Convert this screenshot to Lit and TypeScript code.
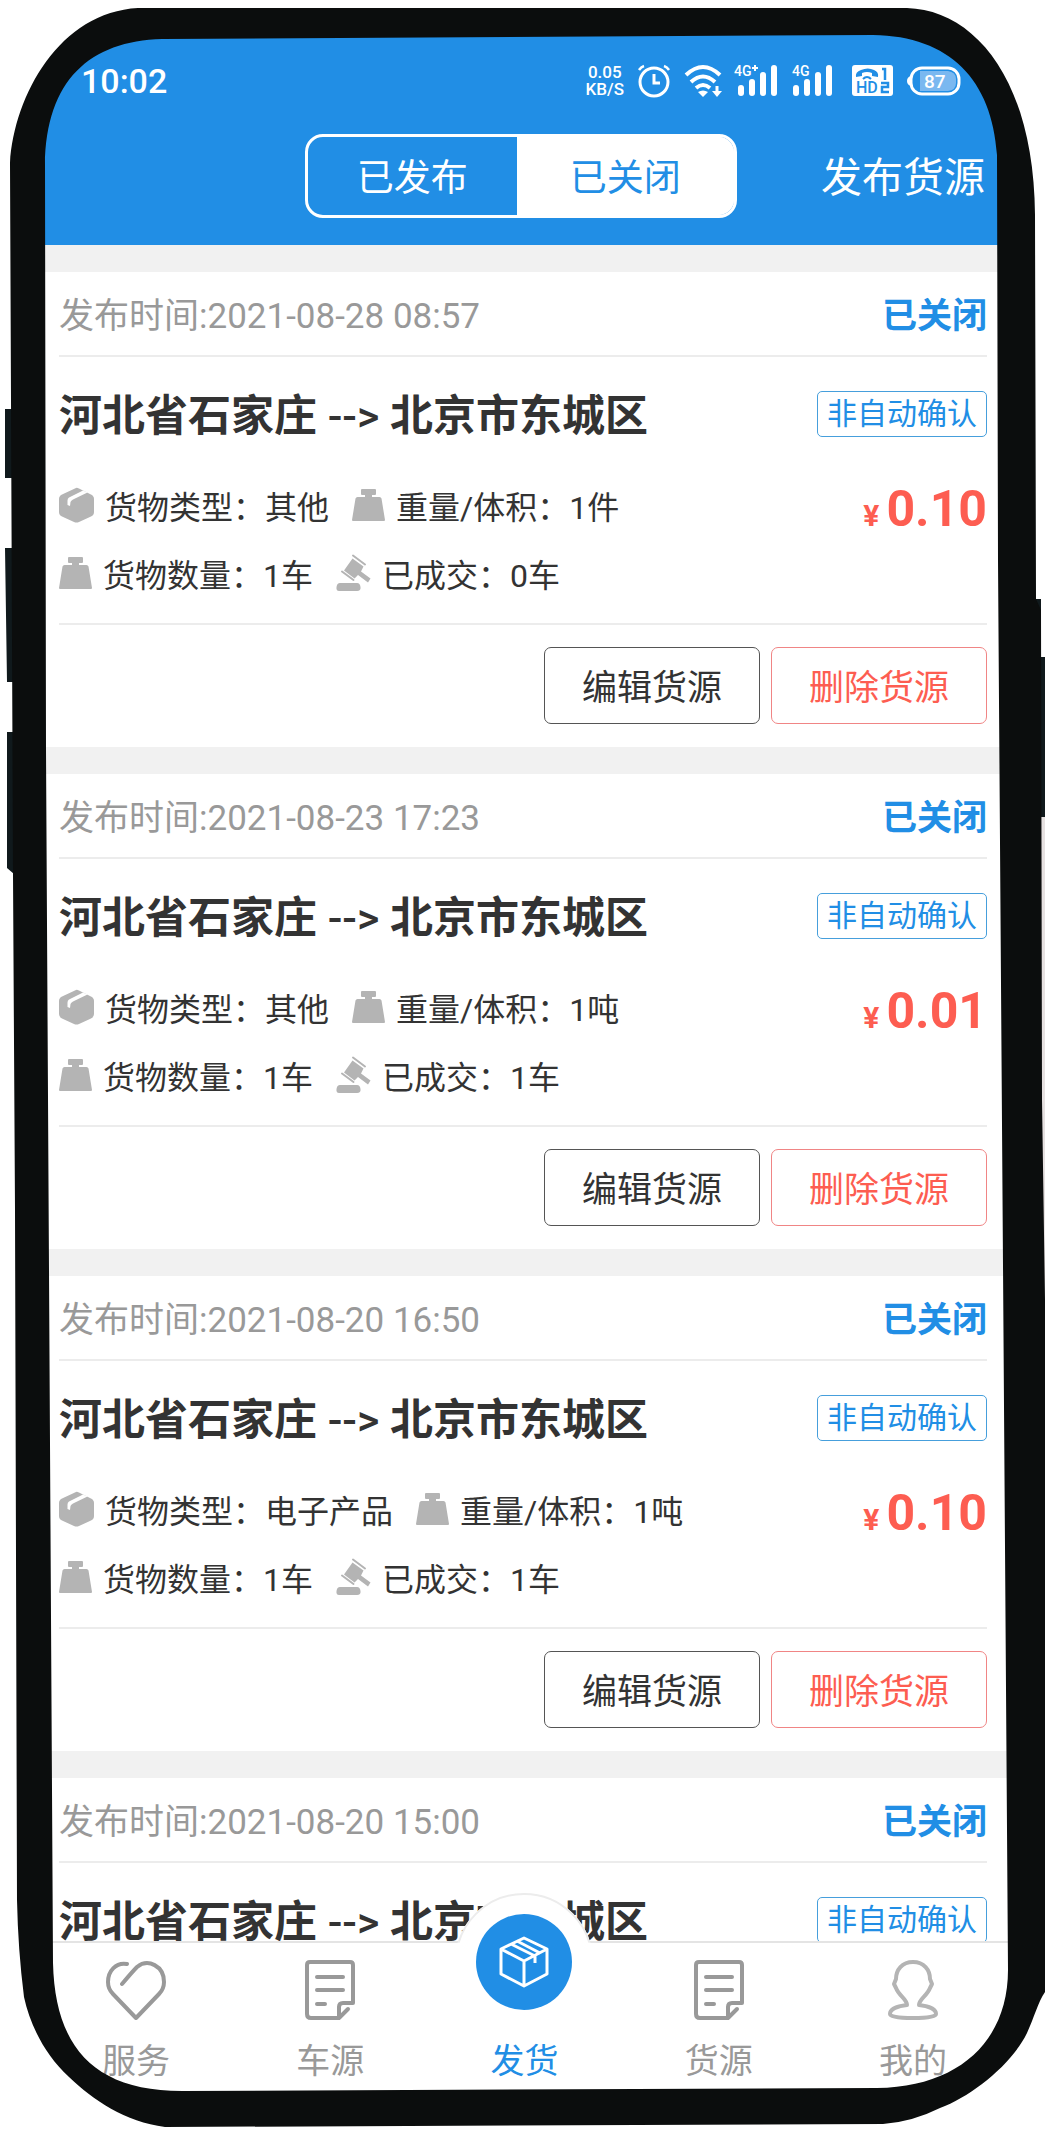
import { LitElement, html, svg, css } from "lit";
import { customElement, property, state } from "lit/decorators.js";

interface Cargo {
  time: string;
  type: string;
  amount: string;
  count: string;
  done: string;
  price: string;
}

const CARGOS: Cargo[] = [
  { time: "2021-08-28 08:57", type: "其他", amount: "1件", count: "1车", done: "0车", price: "0.10" },
  { time: "2021-08-23 17:23", type: "其他", amount: "1吨", count: "1车", done: "1车", price: "0.01" },
  { time: "2021-08-20 16:50", type: "电子产品", amount: "1吨", count: "1车", done: "1车", price: "0.10" },
  { time: "2021-08-20 15:00", type: "其他", amount: "1吨", count: "1车", done: "0车", price: "0.10" },
];

const boxIcon = html`<svg class="ico" width="35" height="36" viewBox="0 0 35 36" aria-hidden="true">
  <path d="M17 1 3 7.500Q0 9 0 12V25Q0 28 3 29.500L15 35Q17.500 36 20 35L32 29.500Q35 28 35 25V12Q35 9 32 7.500L20 1.500Q18 .5 17 1Z" fill="#b4b4b4"/>
  <path d="M8.500 18V13.500Q8.500 11.500 10 10.500L24 3.500 28.500 5.500 14 12.500Q12 13.500 11.500 15L11 19Z" fill="#fff"/>
</svg>`;

const weightIcon = html`<svg class="ico" width="33" height="34" viewBox="0 0 33 34" aria-hidden="true">
  <path d="M10 1H23Q24 1 24 2V6Q24 7 23 7H20V9H27.500Q29 9 29.500 10.500L33 32Q33 33 32 33H1Q0 33 0 32L3.500 10.500Q4 9 5.500 9H13V7H10Q9 7 9 6V2Q9 1 10 1Z" fill="#b4b4b4"/>
</svg>`;

const gavelIcon = html`<svg class="ico" width="35" height="38" viewBox="0 0 35 38" aria-hidden="true">
  <g fill="#b4b4b4">
    <path d="M4 29H21Q24 29 24.500 33Q25 37 21 37H3Q0 37 .5 33Q1 29 4 29Z"/>
    <path d="M16.500 4.500 27.500 12.500 25 17.500 34.500 24.500 32 28.500 22 21 18.500 24.500 8 16.500Z"/>
  </g>
  <path d="M17 1.500 29 10.500M6 17.500 17.500 26" stroke="#b4b4b4" stroke-width="2" stroke-linecap="round"/>
</svg>`;

const bars = (x: number) => svg`<g fill="#fff">
  <rect x=${x} y="21" width="6" height="11" rx="3"/>
  <rect x=${x + 11} y="15" width="6" height="17" rx="3"/>
  <rect x=${x + 22} y="8" width="6" height="24" rx="3"/>
  <rect x=${x + 33} y="1" width="6" height="31" rx="3"/>
</g>`;

const heartIcon = html`<svg width="60" height="60" viewBox="0 0 60 60" fill="none" stroke="#999" stroke-width="4" stroke-linecap="round" stroke-linejoin="round" aria-hidden="true">
  <path d="M21 4C10 2 2 11 2 22Q2 29 7 34L30 58 53 34Q58 29 58 22C58 6 42-2 31 7Q27 11 16 24"/>
</svg>`;

const noteIcon = html`<svg width="60" height="60" viewBox="0 0 60 60" fill="none" stroke="#999" stroke-width="4" stroke-linecap="round" stroke-linejoin="round" aria-hidden="true">
  <path d="M53 43V5Q53 2 50 2H10Q7 2 7 5V54Q7 58 11 58H39L48 49M53 43H43Q39 43 39 47V58"/>
  <path d="M17 17H43M17 30H43M17 44H25"/>
</svg>`;

const userIcon = html`<svg width="60" height="60" viewBox="0 0 60 60" fill="none" stroke="#b4b4b4" stroke-width="4" stroke-linejoin="round" aria-hidden="true">
  <path d="M30 2C19 2 13 10 13 19L11 24 13 28C16 36 24 39 24 45C15 46 7 49 7 54Q7 58 30 58Q53 58 53 54C53 49 45 46 36 45C36 39 44 36 47 28L49 24 47 19C47 10 41 2 30 2Z"/>
</svg>`;

const cubeIcon = html`<svg width="50" height="52" viewBox="0 0 50 52" fill="none" stroke="#fff" stroke-width="3" stroke-linejoin="round" aria-hidden="true">
  <path d="M25 2 48 13V38L25 50 2 38V13ZM2 13 25 25 48 13M25 25V50M12 8 36 20V27"/>
  <path d="M18 5 41 17"/>
</svg>`;

@customElement("cargo-card")
class CargoCard extends LitElement {
  @property({ attribute: false }) cargo!: Cargo;

  static styles = css`
    :host {
      display: block;
      background: #fff;
      padding: 0 23px 23px 20px;
    }
    .top {
      display: flex;
      box-sizing: border-box;
      justify-content: space-between;
      align-items: center;
      height: 85px;
      padding-bottom: 2px;
      border-bottom: 2px solid #ececec;
      font-size: 35px;
      color: #999;
    }
    .closed { color: #218ee5; font-weight: 700; }
    .route {
      display: flex;
      justify-content: space-between;
      align-items: center;
      height: 114px;
    }
    h2 { margin: 0; padding-bottom: 4px; font-size: 43px; font-weight: 700; color: #333; white-space: nowrap; }
    .arrow { font-weight: 500; }
    .tag {
      box-sizing: border-box;
      height: 46px;
      line-height: 44px;
      padding: 0 9px;
      border: 1px solid #469fdc;
      border-radius: 5px;
      color: #218ee5;
      font-size: 30px;
    }
    .body {
      display: flex;
      justify-content: space-between;
      padding: 0 0 16px;
      border-bottom: 2px solid #ececec;
    }
    .row { display: flex; height: 68px; align-items: center; font-size: 32px; color: #333; }
    .item { display: flex; align-items: center; gap: 11px; margin-right: 23px; white-space: nowrap; }
    .ico { flex: none; display: block; }
    .price { padding-top: 4px; line-height: 68px; color: #fd5d51; font-weight: 700; font-size: 50px; white-space: nowrap; }
    .yen { font-size: 30px; margin-right: 7px; }
    .actions { display: flex; justify-content: flex-end; gap: 11px; padding-top: 22px; }
    button {
      width: 216px;
      height: 77px;
      padding: 0 0 2px;
      font: inherit;
      font-size: 35px;
      color: #333;
      background: #fff;
      border: 1px solid #555;
      border-radius: 7px;
    }
    .del { color: #fd5d51; border-color: #f08585; }
  `;

  render() {
    const c = this.cargo;
    return html`
      <div class="top"><span>发布时间:${c.time}</span><span class="closed">已关闭</span></div>
      <div class="route"><h2>河北省石家庄<span class="arrow"> --&gt; </span>北京市东城区</h2><span class="tag">非自动确认</span></div>
      <div class="body">
        <div>
          <div class="row">
            <span class="item">${boxIcon}<span>货物类型：${c.type}</span></span>
            <span class="item">${weightIcon}<span>重量/体积：${c.amount}</span></span>
          </div>
          <div class="row">
            <span class="item">${weightIcon}<span>货物数量：${c.count}</span></span>
            <span class="item">${gavelIcon}<span>已成交：${c.done}</span></span>
          </div>
        </div>
        <div class="price"><span class="yen">¥</span>${c.price}</div>
      </div>
      <div class="actions">
        <button type="button">编辑货源</button>
        <button type="button" class="del">删除货源</button>
      </div>
    `;
  }
}

@customElement("status-bar")
class StatusBar extends LitElement {
  static styles = css`
    :host {
      display: flex;
      align-items: center;
      justify-content: space-between;
      height: 90px;
      color: #fff;
    }
    .clock { font-size: 34px; font-weight: 500; }
    .icons { display: flex; align-items: center; gap: 14px; }
    .speed { font-size: 17px; line-height: 17px; font-weight: 500; text-align: center; }
    svg { display: block; overflow: visible; }
    text { font-family: Roboto, sans-serif; font-weight: 500; }
  `;

  render() {
    return html`
      <span class="clock">10:02</span>
      <div class="icons">
        <div class="speed">0.05<br />KB/S</div>
        <svg width="32" height="34" viewBox="0 0 32 34" fill="none" stroke="#fff" stroke-width="3" aria-hidden="true">
          <circle cx="16" cy="18" r="14"/>
          <path d="M16 10V19H22"/>
          <path d="M1 6Q3 3 6 2M31 6Q29 3 26 2" stroke-width="2.500"/>
        </svg>
        <svg width="38" height="34" viewBox="0 0 38 34" fill="none" stroke="#fff" stroke-width="4" aria-hidden="true">
          <path d="M2 11Q19-5 36 11M7 18Q19 7 31 18"/>
          <path d="M12 24Q19 18 26 24"/>
          <path d="M14 28 19 33 24 28Q19 25 14 28Z" fill="#fff" stroke="none"/>
          <path d="M33 22V30" stroke-width="3"/>
          <path d="M28 27H38L33 33Z" fill="#fff" stroke="none"/>
        </svg>
        <svg width="43" height="34" viewBox="2 0 43 34" aria-hidden="true">
          ${bars(4)}<text x="0" y="12" font-size="14" fill="#fff">4G</text>
          <path d="M18 4H24M21 1V7" stroke="#fff" stroke-width="2"/>
        </svg>
        <svg width="40" height="34" viewBox="1 0 40 34" aria-hidden="true">
          ${bars(1)}<text x="0" y="12" font-size="14" fill="#fff">4G</text>
        </svg>
        <svg width="46" height="32" viewBox="-5 0 46 32" aria-hidden="true">
          <rect width="41" height="31" rx="3" fill="#fff"/>
          <path d="M4 12Q3 7 9 5Q16 2 22 5Q27 7 26 12L20 11V8Q15 6 10 8V11Z" fill="#218ee5"/>
          <path d="M11 14Q15 10 19 14" stroke="#218ee5" stroke-width="2" fill="none"/>
          <text x="4" y="28" font-size="16" fill="#218ee5">HD</text>
          <path d="M30 4H33V15M29 18H36V22H30V27H37" stroke="#218ee5" stroke-width="2.500" fill="none"/>
        </svg>
        <svg width="54" height="30" viewBox="0 0 54 30" aria-label="87">
          <rect x="4" y="2" width="48" height="26" rx="11" fill="none" stroke="#fff" stroke-width="3"/>
          <path d="M4 10Q0 11 0 15T4 20Z" fill="#fff"/>
          <path d="M13 5H41Q49 6 49 13V17Q49 24 41 25H13Z" fill="#7ab8f0"/>
          <text x="17" y="22" font-size="19" fill="#fff">87</text>
        </svg>
      </div>
    `;
  }
}

@customElement("tab-bar")
class TabBar extends LitElement {
  static styles = css`
    :host { display: block; position: relative; z-index: 1; background: #fff; border-top: 2px solid #e4e4e4; }
    nav { display: grid; grid-template-columns: repeat(5, 1fr); height: 150px; }
    a {
      display: flex;
      flex-direction: column;
      align-items: center;
      padding-top: 17px;
      color: #999;
      font-size: 34px;
      line-height: 50px;
      text-decoration: none;
    }
    svg { display: block; }
    .name { margin-top: 16px; }
    .on { position: relative; color: #218ee5; padding-top: 93px; }
    .on .name { margin-top: 0; }
    .fab {
      position: absolute;
      top: -50px;
      left: 50%;
      margin-left: -69px;
      width: 138px;
      height: 138px;
      display: flex;
      align-items: center;
      justify-content: center;
      border-radius: 50%;
      background: #fff;
    }
    .fab::before {
      content: "";
      position: absolute;
      inset: 0;
      border: 2px solid #ececec;
      border-radius: 50%;
      clip-path: inset(0 0 64% 0);
    }
    .disc {
      display: flex;
      align-items: center;
      justify-content: center;
      width: 96px;
      height: 96px;
      border-radius: 50%;
      background: #218ee5;
    }
  `;

  render() {
    return html`<nav>
      <a href="#service">${heartIcon}<span class="name">服务</span></a>
      <a href="#trucks">${noteIcon}<span class="name">车源</span></a>
      <a href="#ship" class="on"><span class="fab"><span class="disc">${cubeIcon}</span></span><span class="name">发货</span></a>
      <a href="#cargo">${noteIcon}<span class="name">货源</span></a>
      <a href="#me">${userIcon}<span class="name">我的</span></a>
    </nav>`;
  }
}

@customElement("app-root")
class AppRoot extends LitElement {
  @state() private tab = 1;

  static styles = css`
    :host {
      display: block;
      height: 100vh;
      background: #fff;
      font-family: Roboto, "Noto Sans CJK SC", sans-serif;
    }
    .phone { position: relative; box-sizing: border-box; height: 100%; padding: 34px 35px 37px 39px; overflow: hidden; }
    .screen { display: flex; flex-direction: column; height: 100%; border-radius: 110px; overflow: hidden; background: #fff; }
    .frame { position: absolute; inset: 0; width: 100%; height: 100%; pointer-events: none; z-index: 2; }
    header { flex: none; height: 211px; background: #218ee5; }
    status-bar { padding: 2px 49px 0 42px; }
    .bar {
      display: grid;
      grid-template-columns: 1fr 432px 1fr;
      align-items: center;
      padding: 8px 25px 0 18px;
    }
    .seg {
      grid-column: 2;
      display: flex;
      box-sizing: border-box;
      height: 84px;
      border: 3px solid #fff;
      border-radius: 18px;
      overflow: hidden;
    }
    .seg button {
      flex: 1;
      padding: 0 0 2px;
      border: 0;
      background: none;
      color: #fff;
      font: inherit;
      font-size: 37px;
    }
    .seg button:first-child { flex: 0 0 49%; }
    .seg .on { background: #fff; color: #218ee5; }
    .seg .on:last-child { box-shadow: 2px 0 0 1px #fff; clip-path: inset(-2px -3px -2px 0); }
    .post { grid-column: 3; justify-self: end; padding-bottom: 4px; color: #fff; font-size: 41px; text-decoration: none; white-space: nowrap; }
    .list {
      flex: 1;
      min-height: 0;
      overflow: hidden;
      display: flex;
      flex-direction: column;
      gap: 27px;
      padding-top: 27px;
      background: #f1f1f1;
    }
    cargo-card { flex: none; }
    tab-bar { flex: none; }
  `;

  render() {
    return html`<div class="phone">
      <main class="screen">
        <header>
          <status-bar></status-bar>
          <div class="bar">
            <div class="seg">
              ${["已发布", "已关闭"].map(
                (t, i) => html`<button type="button" class=${this.tab === i ? "on" : ""} @click=${() => (this.tab = i)}>${t}</button>`
              )}
            </div>
            <a class="post" href="#post">发布货源</a>
          </div>
        </header>
        <section class="list">${CARGOS.map((c) => html`<cargo-card .cargo=${c}></cargo-card>`)}</section>
        <tab-bar></tab-bar>
      </main>
      <svg class="frame" viewBox="0 0 1045 2130" preserveAspectRatio="none" aria-hidden="true">
        <path fill="#e6e1e1" d="M1040 817H1045V1300H1040Z"/>
        <path fill="#10191c" d="M12 409H5V478H12ZM13 548H5L7 682H13ZM14 732H7V868L14 874ZM1034 599H1041V657H1045V817H1034Z"/>
        <path fill="#0b0d0d" fill-rule="evenodd" d="M138 8H907C975 10 1034 80 1035 215L1036 599 1041 610 1042 1100 1045 1300V1992C1038 2002 1034 2018 1027 2033C1012 2064 972 2096 940 2108Q912 2122 883 2124L165 2127C125 2122 93 2100 69 2077C45 2055 30 2025 24 1997Q18 1950 17 1900L15 1210 13 874 10 163C14 95 60 12 138 8Z
          M162 39C90 41 46 80 45 165L46 750L53 1963C55 2045 92 2091 182 2091L877 2088C960 2087 1008 2040 1008 1970L998 560L997 155C992 80 950 36 873 35Z"/>
      </svg>
    </div>`;
  }
}
